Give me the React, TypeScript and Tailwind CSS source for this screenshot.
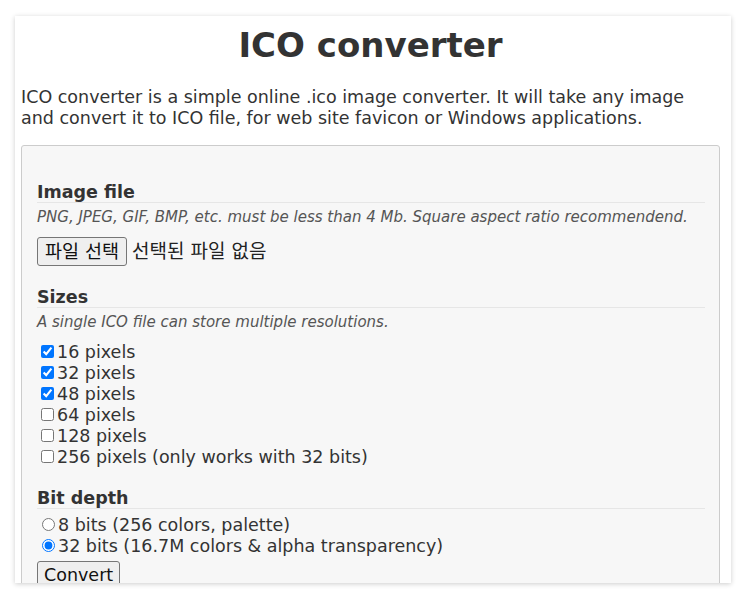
import React from "react";

const sizes = [
  { label: "16 pixels", checked: true },
  { label: "32 pixels", checked: true },
  { label: "48 pixels", checked: true },
  { label: "64 pixels", checked: false },
  { label: "128 pixels", checked: false },
  { label: "256 pixels (only works with 32 bits)", checked: false },
];

function Heading({ children, className = "" }: { children: React.ReactNode; className?: string }) {
  return (
    <div className={`text-[17.5px] leading-[20px] font-bold text-[#333] border-b border-[#e6e6e6] ${className}`}>
      {children}
    </div>
  );
}

function Desc({ children }: { children: React.ReactNode }) {
  return <div className="mt-[5px] text-[15px] leading-[19px] italic text-[#555]">{children}</div>;
}

export default function App() {
  return (
    <div className="min-h-screen bg-white pt-[16px] pl-[15px] font-['DejaVu_Sans','Noto_Sans_CJK_KR',sans-serif] text-[#333]">
      <div className="w-[716px] h-[567px] overflow-hidden bg-white shadow-[0_1px_5px_rgba(0,0,0,0.2)] pl-[6px] pr-[11px]">
        <h1 className="mt-[9px] text-center text-[34px] leading-[40px] font-bold text-[#333]">ICO converter</h1>
        <p className="mt-[22px] text-[17.5px] leading-[21px]">
          ICO converter is a simple online .ico image converter. It will take any image
          <br />
          and convert it to ICO file, for web site favicon or Windows applications.
        </p>
        <div className="mt-[16px] rounded-[3px] border border-[#cccccc] bg-[#f7f7f7] pl-[15px] pr-[14px] pt-[15px] pb-[40px]">
          <Heading className="mt-[21px]">Image file</Heading>
          <Desc>PNG, JPEG, GIF, BMP, etc. must be less than 4 Mb. Square aspect ratio recommendend.</Desc>
          <div className="mt-[10px] flex items-center text-[17.5px] leading-[21px]">
            <button className="h-[29px] w-[90px] flex items-center justify-center rounded-[3px] border border-[#767676] bg-[#efefef] text-[#111] text-[18.5px] leading-[21px]">
              파일 선택
            </button>
            <span className="ml-[5px] text-[#222] text-[19px]">선택된 파일 없음</span>
          </div>

          <Heading className="mt-[21px]">Sizes</Heading>
          <Desc>A single ICO file can store multiple resolutions.</Desc>
          <div className="mt-[10px] text-[17.5px] leading-[21px]">
            {sizes.map((s) => (
              <label key={s.label} className="block">
                <input type="checkbox" defaultChecked={s.checked} className="ml-[4px] mr-[3px] w-[13px] h-[13px]" />
                {s.label}
              </label>
            ))}
          </div>

          <Heading className="mt-[20px]">Bit depth</Heading>
          <div className="mt-[6px] text-[17.5px] leading-[21px]">
            <label className="block">
              <input type="radio" name="bits" className="ml-[5px] mr-[3px] w-[13px] h-[13px]" />
              8 bits (256 colors, palette)
            </label>
            <label className="block">
              <input type="radio" name="bits" defaultChecked className="ml-[5px] mr-[3px] w-[13px] h-[13px]" />
              32 bits (16.7M colors &amp; alpha transparency)
            </label>
          </div>
          <button className="mt-[4px] h-[29px] px-[6px] rounded-[3px] border border-[#767676] bg-[#efefef] text-[#111] text-[17.5px] leading-[21px]">
            Convert
          </button>
        </div>
      </div>
    </div>
  );
}
